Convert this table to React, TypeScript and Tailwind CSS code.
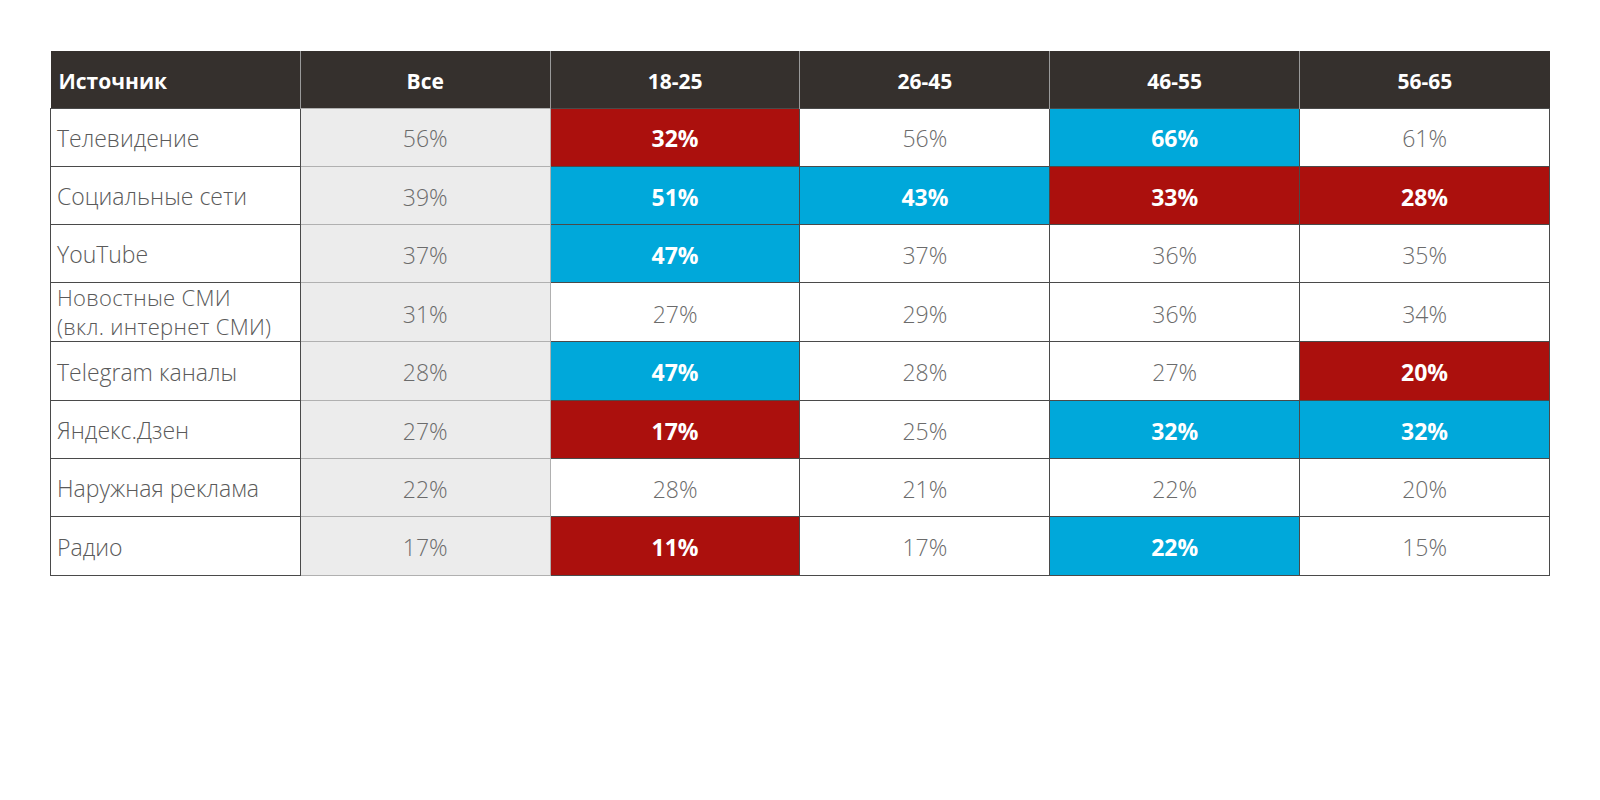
import React from "react";

// Cell highlight: r = red (low), b = blue (high), n = none
type Mark = "r" | "b" | "n";

interface Row {
  label: string;
  sub?: string;
  all: string;
  values: [string, Mark][];
}

const headers = ["Все", "18-25", "26-45", "46-55", "56-65"];

const rows: Row[] = [
  { label: "Телевидение", all: "56%", values: [["32%", "r"], ["56%", "n"], ["66%", "b"], ["61%", "n"]] },
  { label: "Социальные сети", all: "39%", values: [["51%", "b"], ["43%", "b"], ["33%", "r"], ["28%", "r"]] },
  { label: "YouTube", all: "37%", values: [["47%", "b"], ["37%", "n"], ["36%", "n"], ["35%", "n"]] },
  {
    label: "Новостные СМИ",
    sub: "(вкл. интернет СМИ)",
    all: "31%",
    values: [["27%", "n"], ["29%", "n"], ["36%", "n"], ["34%", "n"]],
  },
  { label: "Telegram каналы", all: "28%", values: [["47%", "b"], ["28%", "n"], ["27%", "n"], ["20%", "r"]] },
  { label: "Яндекс.Дзен", all: "27%", values: [["17%", "r"], ["25%", "n"], ["32%", "b"], ["32%", "b"]] },
  { label: "Наружная реклама", all: "22%", values: [["28%", "n"], ["21%", "n"], ["22%", "n"], ["20%", "n"]] },
  { label: "Радио", all: "17%", values: [["11%", "r"], ["17%", "n"], ["22%", "b"], ["15%", "n"]] },
];

function ValueCell({ value, mark }: { value: string; mark: Mark }) {
  if (mark === "r") {
    return (
      <td className="border border-[#4a4a4a] bg-[#ab100d] pt-[3px] text-center text-[23px] font-bold text-white">
        {value}
      </td>
    );
  }
  if (mark === "b") {
    return (
      <td className="border border-[#4a4a4a] bg-[#00a8da] pt-[3px] text-center text-[23px] font-bold text-white">
        {value}
      </td>
    );
  }
  return (
    <td className="border border-[#4a4a4a] bg-white pt-[3px] text-center text-[23px] font-light text-[#6b6b6b]">
      {value}
    </td>
  );
}

function LabelCell({ label, sub }: { label: string; sub?: string }) {
  if (sub) {
    return (
      <td className="border border-[#4a4a4a] bg-white pl-[6px] text-left text-[22px] font-light leading-[29px] tracking-[0.3px] text-[#5a5a5a]">
        <div>{label}</div>
        <div>{sub}</div>
      </td>
    );
  }
  return (
    <td className="border border-[#4a4a4a] bg-white pl-[6px] pt-[2px] text-left text-[23px] font-light text-[#5a5a5a]">
      {label}
    </td>
  );
}

export default function App() {
  return (
    <div
      className="w-[1600px] h-[800px] bg-white pt-[51px] pl-[50px]"
      style={{ fontFamily: "'Open Sans', 'Noto Sans', sans-serif" }}
    >
      {/* Table */}
      <table className="w-[1500px] table-fixed border-collapse">
        <thead>
          <tr className="h-[57px] bg-[#35302d] text-white text-[21px] font-bold">
            <th className="border-r border-[#9a9a9a] pl-[8px] pt-[4px] text-left">Источник</th>
            {headers.map((h) => (
              <th key={h} className="border-x border-[#9a9a9a] pt-[4px] text-center last:border-r-0">
                {h}
              </th>
            ))}
          </tr>
        </thead>
        <tbody>
          {rows.map((row, i) => (
            <tr key={i} className="h-[58.3px]">
              <LabelCell label={row.label} sub={row.sub} />
              <td className="border border-[#b0b0b0] bg-[#ececec] pt-[3px] text-center text-[23px] font-light text-[#6b6b6b]">
                {row.all}
              </td>
              {row.values.map(([v, m], j) => (
                <ValueCell key={j} value={v} mark={m} />
              ))}
            </tr>
          ))}
        </tbody>
      </table>
    </div>
  );
}
